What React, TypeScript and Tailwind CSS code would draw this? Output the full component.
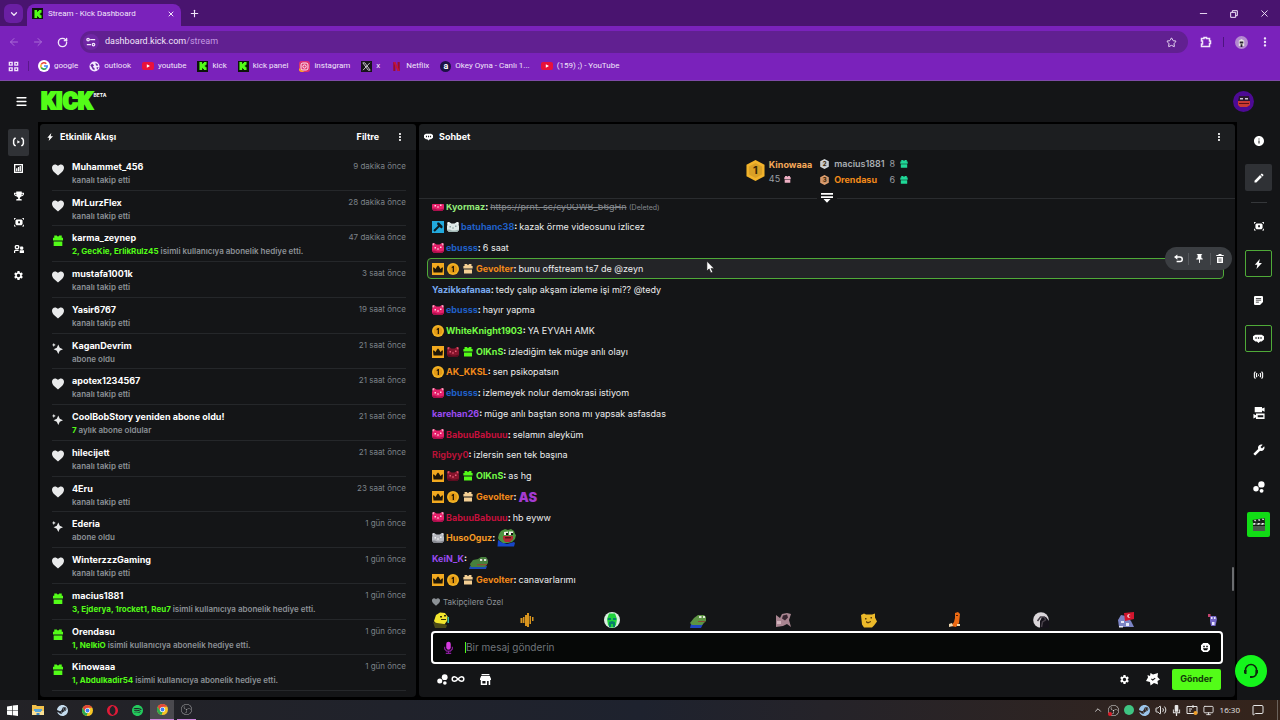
import type { ReactNode } from "react"
import { ArrowLeft, ArrowRight, ChevronDown, ChevronUp, Menu, MessageSquare, Minus, Monitor, Plus, RotateCw, Star, Volume2, X, Infinity as InfinityIcon } from "lucide-react"
import { MdEdit, MdInfo, MdPushPin, MdSettings, MdBuild, MdMoreVert } from "react-icons/md"
import { FaTrophy } from "react-icons/fa"
import { SiKick, SiSpotify, SiOpera, SiSteam, SiObsstudio } from "react-icons/si"

type Feed = { icon: "heart" | "gift" | "spark"; name: string; hi?: string; text: string; time: string }

const feed: Feed[] = [
  { icon: "heart", name: "Muhammet_456", text: "kanalı takip etti", time: "9 dakika önce" },
  { icon: "heart", name: "MrLurzFlex", text: "kanalı takip etti", time: "28 dakika önce" },
  { icon: "gift", name: "karma_zeynep", hi: "2, GecKie, ErlikRulz45", text: "isimli kullanıcıya abonelik hediye etti.", time: "47 dakika önce" },
  { icon: "heart", name: "mustafa1001k", text: "kanalı takip etti", time: "3 saat önce" },
  { icon: "heart", name: "Yasir6767", text: "kanalı takip etti", time: "19 saat önce" },
  { icon: "spark", name: "KaganDevrim", text: "abone oldu", time: "21 saat önce" },
  { icon: "heart", name: "apotex1234567", text: "kanalı takip etti", time: "21 saat önce" },
  { icon: "spark", name: "CoolBobStory yeniden abone oldu!", hi: "7", text: "aylık abone oldular", time: "21 saat önce" },
  { icon: "heart", name: "hilecijett", text: "kanalı takip etti", time: "21 saat önce" },
  { icon: "heart", name: "4Eru", text: "kanalı takip etti", time: "23 saat önce" },
  { icon: "spark", name: "Ederia", text: "abone oldu", time: "1 gün önce" },
  { icon: "heart", name: "WinterzzzGaming", text: "kanalı takip etti", time: "1 gün önce" },
  { icon: "gift", name: "macius1881", hi: "3, Ejderya, 1rocket1, Reu7", text: "isimli kullanıcıya abonelik hediye etti.", time: "1 gün önce" },
  { icon: "gift", name: "Orendasu", hi: "1, NelkiO", text: "isimli kullanıcıya abonelik hediye etti.", time: "1 gün önce" },
  { icon: "gift", name: "Kinowaaa", hi: "1, Abdulkadir54", text: "isimli kullanıcıya abonelik hediye etti.", time: "1 gün önce" },
]

type Msg = { badges?: string[]; name: string; color: string; text?: string; emote?: string; deleted?: boolean; active?: boolean }

const messages: Msg[] = [
  { badges: ["pig"], name: "Kyormaz", color: "text-[#93eb7a]", text: "https://prnt. sc/cy0OWB_b6gHn", deleted: true },
  { badges: ["mod", "catWhite"], name: "batuhanc38", color: "text-[#2060c8]", text: "kazak örme videosunu izlicez" },
  { badges: ["pig"], name: "ebusss", color: "text-[#2060c8]", text: "6 saat" },
  { badges: ["crown", "coin", "giftTan"], name: "Gevolter", color: "text-[#f28a1a]", text: "bunu offstream ts7 de @zeyn", active: true },
  { name: "Yazikkafanaa", color: "text-[#79aaf0]", text: "tedy çalıp akşam izleme işi mi?? @tedy" },
  { badges: ["pig"], name: "ebusss", color: "text-[#2060c8]", text: "hayır yapma" },
  { badges: ["coin"], name: "WhiteKnight1903", color: "text-[#75fd46]", text: "YA EYVAH AMK" },
  { badges: ["crown", "devil", "giftGreen"], name: "OlKnS", color: "text-[#75fd46]", text: "izlediğim tek müge anlı olayı" },
  { badges: ["coin"], name: "AK_KKSL", color: "text-[#f28a1a]", text: "sen psikopatsın" },
  { badges: ["pig"], name: "ebusss", color: "text-[#2060c8]", text: "izlemeyek nolur demokrasi istiyom" },
  { name: "karehan26", color: "text-[#9a4bf0]", text: "müge anlı baştan sona mı yapsak asfasdas" },
  { badges: ["pig"], name: "BabuuBabuuu", color: "text-[#c4103c]", text: "selamın aleyküm" },
  { name: "Rigbyy0", color: "text-[#b81238]", text: "izlersin sen tek başına" },
  { badges: ["crown", "devil", "giftGreen"], name: "OlKnS", color: "text-[#75fd46]", text: "as hg" },
  { badges: ["crown", "coin", "giftTan"], name: "Gevolter", color: "text-[#f28a1a]", emote: "as" },
  { badges: ["pig"], name: "BabuuBabuuu", color: "text-[#c4103c]", text: "hb eyww" },
  { badges: ["catGrey"], name: "HusoOguz", color: "text-[#f59a24]", emote: "pepeLaugh" },
  { name: "KeiN_K", color: "text-[#9a4bf0]", emote: "pepeLie" },
  { badges: ["crown", "coin", "giftTan"], name: "Gevolter", color: "text-[#f28a1a]", text: "canavarlarımı" },
]

function Heart({ className = "" }) {
  return (
    <svg viewBox="0 0 14 13" className={className} fill="currentColor">
      <path d="M7 1.800C8 .6 9.200 0 10.500 0 12.600 0 14 1.700 14 4c0 2.200-1.200 3.900-3 5.500L7 13 3 9.500C1.200 7.900 0 6.200 0 4 0 1.700 1.400 0 3.500 0 4.800 0 6 .6 7 1.800z" />
    </svg>
  )
}

function Gift({ className = "" }) {
  return (
    <svg viewBox="0 0 12 13" className={className} fill="currentColor">
      <path d="M1.500 0h3L6 1.500 7.500 0h3v2.500H12V6H0V2.500h1.500zM.8 7h10.400v5.500H.8z" />
    </svg>
  )
}

function Spark({ className = "" }) {
  return (
    <svg viewBox="0 0 14 14" className={className} fill="currentColor">
      <path d="M8 2 9.900 6.100 14 8 9.900 9.900 8 14 6.100 9.900 2 8l4.100-1.900zM2.300 0l.8 1.700 1.700.8-1.700.8-.8 1.700-.8-1.700L-.2 2.500l1.700-.8z" />
    </svg>
  )
}

function Bolt({ className = "" }) {
  return (
    <svg viewBox="0 0 10 12" className={className} fill="currentColor">
      <path d="M7 0 1 7h3L3 12 9.500 4.800H6z" />
    </svg>
  )
}

function Bubble({ className = "" }) {
  return (
    <svg viewBox="0 0 14 12" className={className} fill="currentColor">
      <path fillRule="evenodd" d="M3 1h8l3 2v4l-3 2.500H9L7 11.500 5 9.500H3L0 7V3zM3 4.200v2h1.700v-2zm3.200 0v2h1.700v-2zm3.200 0v2H11v-2z" />
    </svg>
  )
}

function Live({ className = "" }) {
  return (
    <svg viewBox="0 0 16 12" className={className} fill="none" stroke="currentColor" strokeWidth="1.8">
      <path d="M4.500 1 3 2 2 4v4l1 2 1.500 1M11.500 1 13 2l1 2v4l-1 2-1.500 1" />
      <path d="M6.500 4v4L10 6z" fill="currentColor" stroke="none" />
    </svg>
  )
}

function Signal({ className = "" }) {
  return (
    <svg viewBox="0 0 16 12" className={className} fill="none" stroke="currentColor" strokeWidth="1.600">
      <path d="M3.500 1 2 3v6l1.500 2M6 3 5 4v4l1 1M10 3l1 1v4l-1 1M12.500 1 14 3v6l-1.500 2" />
      <rect x="7.200" y="5" width="1.600" height="2" fill="currentColor" stroke="none" />
    </svg>
  )
}

function Clip({ className = "" }) {
  return (
    <svg viewBox="0 0 14 12" className={className} fill="currentColor">
      <path fillRule="evenodd" d="M3.500 2h7L12 3.500v5L10.500 10h-7L2 8.500v-5zM5.800 4.500v3h2.500v-3z" />
      <path d="M0 0h2.500v1.200H1.200V2.500H0zM11.500 0H14v2.500h-1.200V1.200h-1.300zM0 9.500h1.200v1.300h1.300V12H0zM12.800 9.500H14V12h-2.500v-1.200h1.300z" />
    </svg>
  )
}

function Chart({ className = "" }) {
  return (
    <svg viewBox="0 0 12 12" className={className} fill="currentColor">
      <path fillRule="evenodd" d="M0 0h12v12H0zM1.800 1.800v8.400h8.400V1.800zM2.800 5.500h1.700v4H2.800zM5.200 4h1.700v5.500H5.200zM7.500 2.800h1.700v6.700H7.500z" />
    </svg>
  )
}

function People({ className = "" }) {
  return (
    <svg viewBox="0 0 14 12" className={className} fill="currentColor">
      <path fillRule="evenodd" d="M2.500 0h3.500l1.500 1.500v3L6 6H2.500L1 4.500v-3zM3 1.700v2.600h2.500V1.700zM0 11.500V8l1.500-1.300h5V8.400H1.700v3.100zM9 2h3l1 1v2.500l-1 1H9.500l-1-1V3zM8 7.500h6v4H8z" />
    </svg>
  )
}

function Dots({ className = "" }) {
  return (
    <svg viewBox="0 0 14 14" className={className} fill="currentColor">
      <circle cx="9.800" cy="4" r="3.700" />
      <circle cx="3.500" cy="9" r="3.200" />
      <circle cx="10" cy="11.500" r="2.300" />
    </svg>
  )
}

function Note({ className = "" }) {
  return (
    <svg viewBox="0 0 12 12" className={className} fill="currentColor">
      <path fillRule="evenodd" d="M1 0h10l1 1v7l-4 4H1l-1-1V1zM2.500 2.500v1h7v-1zm0 2.500v1h7V5zm0 2.500v1h4v-1z" />
    </svg>
  )
}

function Cameras({ className = "" }) {
  return (
    <svg viewBox="0 0 14 14" className={className} fill="currentColor">
      <path fillRule="evenodd" d="M2 0h8.500v1.800L13.500.5v5l-3-1.300V6H2zM3.500 7.500h10V14h-10v-2L.5 13.300v-5l3 1.300zM5.500 9.500V12H12V9.500z" />
    </svg>
  )
}

function Store({ className = "" }) {
  return (
    <svg viewBox="0 0 14 14" className={className} fill="currentColor">
      <path d="M2 0h10v1.500H2zM1.500 2.500h11L14 6v1.500H0V6z" />
      <path fillRule="evenodd" d="M1 7h12v7h-2V9H9v5H1zM3 9v3h4V9z" />
    </svg>
  )
}

function Undo({ className = "" }) {
  return (
    <svg viewBox="0 0 12 12" className={className} fill="none" stroke="currentColor" strokeWidth="2">
      <path d="M2.500 4h5.500a2.700 2.700 0 0 1 0 6H3.500" />
      <path d="M4.500.5v7L0 4z" fill="currentColor" stroke="none" />
    </svg>
  )
}

function Wordmark() {
  return (
    <span className="flex items-start">
      <span className="font-[Roboto,sans-serif] text-[23px]/[18px] font-black text-[#53fc18] [-webkit-text-stroke:2px_#53fc18]">KICK</span>
      <span className="ml-px text-[5px]/[5px] font-bold text-white">BETA</span>
    </span>
  )
}

/* small face used by the pig, cat and devil badges */
function Face({ base, shade, tip, eye }: { base: string; shade: string; tip: string; eye: string }) {
  return (
    <svg viewBox="0 0 12 12" className="size-3 shrink-0">
      <path d="M.5 1.500 2 1l2.500 1.500h3L10 1l1.500.5v2L12 5v4l-2 2H2L0 9V5l.5-1.500z" fill={base} />
      <path d="M0 8.500h3l2 1h3l4-1V9l-2 2H2L0 9z" fill={shade} />
      <path d="M.5 1.500 2 1l.5 1-1 1.500H.5zM10 1l1.500.5v2h-1l-1-1.500z" fill={tip} />
      <path d="M2.500 5h1.500v1.500H2.500zM8 4.500h1.500V6H8zM5 6.500h2v1H5z" fill={eye} />
    </svg>
  )
}

function Badge({ kind }: { kind: string }) {
  switch (kind) {
    case "pig":
      return <Face base="#e6216b" shade="#ad0f4d" tip="#f9a6c2" eye="#ffd0df" />
    case "catWhite":
      return <Face base="#dfe8e7" shade="#a2b8b6" tip="#f4f8f8" eye="#8fa5a4" />
    case "catGrey":
      return <Face base="#b6b8bf" shade="#85878f" tip="#d8dae0" eye="#f4f4f6" />
    case "devil":
      return <Face base="#86142c" shade="#5d0c20" tip="#e05068" eye="#e9607a" />
    case "giftTan":
      return <span className="flex size-3 shrink-0 items-center justify-center text-[#f3cf94]"><Gift className="size-[10px]" /></span>
    case "giftGreen":
      return <span className="flex size-3 shrink-0 items-center justify-center text-[#53fc18]"><Gift className="size-[10px]" /></span>
    case "mod":
      return (
        <svg viewBox="0 0 12 12" className="size-3 shrink-0">
          <path d="M0 0h12v12H0z" fill="#22a9dd" />
          <path d="M5.500 1.500H7L10.500 5v1.500l-1 1L7.500 6 2.800 10.700 1.300 9.200 6 4.700 5 3z" fill="#0d1a20" />
        </svg>
      )
    case "crown":
      return (
        <svg viewBox="0 0 12 12" className="size-3 shrink-0">
          <path d="M0 0h12v12H0z" fill="#f2a91f" />
          <path d="M1 4.500h1L3.500 6 5 3.500 6 2.500l1 1L8.500 6 10 4.500h1l-.5 5h-9z" fill="#1d1608" />
        </svg>
      )
    default:
      return (
        <svg viewBox="0 0 12 12" className="size-3 shrink-0">
          <circle cx="6" cy="6" r="6" fill="#f3b324" />
          <circle cx="6" cy="6" r="4.300" fill="#e39a16" />
          <path d="M4.700 4 6 3h1v6H5.700V4.800l-1 .4z" fill="#2a1b05" />
        </svg>
      )
  }
}

function Emote({ kind }: { kind: string }) {
  if (kind === "as") return <span className="text-[13px]/[18px] font-black text-[#a33bd0]">AS</span>
  if (kind === "pepeLaugh")
    return (
      <svg viewBox="0 0 20 18" className="h-[18px] w-5">
        <path d="M1 11l3 2 6 2 7-2 1 1-1 3.500H.5z" fill="#1746c8" />
        <path d="M2 5 4 2l4-2 3 1 3-1 3 2 1 3 1 1-1 4-3 3-4 1H6l-4-3-1-2z" fill="#4f9440" />
        <path d="M7 3l4-.5V6H7zM12 2.500h4V6h-4z" fill="#f3f3e8" />
        <path d="M9 4h2v2H9zM14 4h2v2h-2z" fill="#111" />
        <path d="M6 7h10v3l-3 3H8L6 10z" fill="#b32a35" />
        <path d="M8 8h6v1.500H8z" fill="#5e0f18" />
      </svg>
    )
  return (
    <svg viewBox="0 0 20 12" className="h-3 w-5 translate-y-1">
      <path d="M1 9h17l-1 3H0z" fill="#1c4bb8" />
      <path d="M1 7 4 3l5-1 3-2h5l2 3v3l-3 4H2z" fill="#47803d" />
      <path d="M11 2h3v2h-3zM15 2h3v2h-3z" fill="#dfe8d8" />
      <path d="M13 2.500h1v1h-1zM17 2.500h1v1h-1z" fill="#111" />
      <path d="M8 7h10v1.300H8z" fill="#8a4a35" />
    </svg>
  )
}

/* quick emotes above the message box */
const quick: { label: string; art: ReactNode }[] = [
  { label: "limon", art: <><path d="M1 9 3 3l4-2.500 5 .5 2.500 3.500L14 9l-3 4H4z" fill="#f1e52e" /><path d="M0 10l4 1 7 1 3 1-1 3H2z" fill="#4b4a18" /><path d="M7 4h2v1.500H7zM11 3h2v1.500h-2zM8 7l5 0v1H8z" fill="#33300c" /><path d="M14.500 5H16v6h-1.500z" fill="#37b7a4" /></> },
  { label: "dans", art: <path d="M1.500 6h2v5h-2zM4 5h1.500v6H4zM6 3h2v11H6zM8 1h2v14H8zM10.500 4h1.500v8h-1.500zM13 5h1.500v4H13z" fill="#d9951f" /> },
  { label: "kulaklık", art: <><circle cx="8" cy="8" r="8" fill="#d9efe0" /><path d="M3 7 5 1.500h6L13 7l-1 6-2 2.500H6L4 13z" fill="#1fd23c" /><path d="M4 6h3v2H4zM9 6h3v2H9zM5 10l3-1 3 1v5H9v-3H7v3H5z" fill="#087d6c" /></> },
  { label: "pepe", art: <><path d="M1 12h12l-2 4H0z" fill="#2148c0" /><path d="M0 11 4 6l4-3h6l2 2v4l-4 4H2z" fill="#5d9444" /><path d="M9 4h2.500v2H9zM13 4h2v2h-2z" fill="#dfe8d8" /><path d="M8 9h7v1H8z" fill="#8a4a35" /></> },
  { label: "kedi", art: <><path d="M0 3l4 3 2-4 5-1 4 1-2 6 2 7-4-3-4 2-7 1z" fill="#a98591" /><path d="M7 3.500l4-1 1 3-3 3-3-2z" fill="#382530" /><path d="M1 9h4v3H1z" fill="#d3b4bd" /></> },
  { label: "ekmek", art: <><path d="M0 3l3-1.500 2 1h6l3-1v4l2 4-3 4-2 2H3l-2-3z" fill="#ecb92a" /><path d="M4 6h1.500v1.500H4zM9.500 5H11v1.500H9.500zM5 9l2 1 3-1v1l-3 1.500-2-1z" fill="#5d3f08" /></> },
  { label: "hotdog", art: <><path d="M8 1l3-1 2 2-1 9-3 4-5-1 3-4 1-4z" fill="#ec6a13" /><path d="M2 12l3-1 1 3-4 1zM10 12h3v2h-3z" fill="#f0d9b0" /><path d="M9 3h2v1H9z" fill="#511f05" /></> },
  { label: "girdap", art: <><circle cx="8" cy="8" r="7.800" fill="#dad6da" /><path d="M7 16V9l2-4h4l3 4v7z" fill="#15121a" /><path d="M4.500 9l3-4 4 0 1 3-3 2-1 5" fill="none" stroke="#463f48" strokeWidth="1.500" /></> },
  { label: "bayrak", art: <><path d="M0 8l3-5 5 1 5 5 3 6H1z" fill="#7c84c5" /><path d="M3 9h3v2H3zM8 11h3v3H8zM1 14h4v1.500H1z" fill="#e6e9fa" /><path d="M6 1l10-1v7l-9 2z" fill="#d3162e" /><circle cx="11" cy="4" r="1.700" fill="#fff" /><circle cx="11.800" cy="4" r="1.300" fill="#d3162e" /></> },
  { label: "robot", art: <><path d="M6 4h6l1 3-1.500 7H7L6 9z" fill="#7466c5" /><path d="M7 5h1.500v2H7zM10 5h1.500v2H10zM8 10h2.500v3H8z" fill="#e8e4ff" /><path d="M4 2h2.500v3H4z" fill="#c5446e" /></> },
]

function Hex({ n, fill, className }: { n: string; fill: string; className: string }) {
  return (
    <span className={`relative flex shrink-0 items-center justify-center ${className}`}>
      <svg viewBox="0 0 20 22" className="absolute inset-0 size-full">
        <path d="M10 0l9.500 5v12L10 22 .5 17V5z" fill={fill} />
        <path d="M10 3l7 3.700v8.600L10 19l-7-3.700V6.700z" fill="#000" opacity=".1" />
      </svg>
      <span className="relative font-bold text-[#3a2604]">{n}</span>
    </span>
  )
}

function Chrome({ className = "" }) {
  return (
    <svg viewBox="0 0 12 12" className={className}>
      <circle cx="6" cy="6" r="6" fill="#f6c526" />
      <path d="M.8 3A6 6 0 0 1 11.200 3H6L3.400 7.500z" fill="#e2443a" />
      <path d="M.8 3 3.400 7.500 6 9l-1 3A6 6 0 0 1 .8 3z" fill="#2da94f" />
      <circle cx="6" cy="6" r="2.800" fill="#fff" />
      <circle cx="6" cy="6" r="2.100" fill="#3f7ff0" />
    </svg>
  )
}

function YouTube() {
  return (
    <svg viewBox="0 0 12 10" className="h-[10px] w-3">
      <rect y="1" width="12" height="8" rx="2" fill="#e8113c" />
      <path d="M4.800 3.200v3.600L8 5z" fill="#fff" />
    </svg>
  )
}

function KickTile() {
  return <span className="flex size-[11px] items-center justify-center bg-[#0b140a] text-[#53fc18]"><SiKick className="size-2" /></span>
}

const bookmarks: { label: string; icon: ReactNode }[] = [
  {
    label: "google",
    icon: (
      <svg viewBox="0 0 12 12" className="size-3">
        <circle cx="6" cy="6" r="6" fill="#fff" />
        <g fill="none" strokeWidth="1.600">
          <path d="M8.300 3.700A3.200 3.200 0 0 0 3.200 4.500" stroke="#e8453c" />
          <path d="M3.200 4.500a3.200 3.200 0 0 0 0 3" stroke="#f6bb1c" />
          <path d="M3.200 7.500a3.200 3.200 0 0 0 5 .8" stroke="#34a853" />
          <path d="M6 6h3.200a3.200 3.200 0 0 1-1 2.300" stroke="#4285f4" />
        </g>
      </svg>
    ),
  },
  {
    label: "outlook",
    icon: (
      <svg viewBox="0 0 12 12" className="size-[11px]">
        <circle cx="6" cy="6" r="5.500" fill="#f4eaff" />
        <path d="M1.500 4.500l2-1.500 2 1.500L4 6.500l2 1V10l-2-1-1-2zM7 2l3 2-1 1.500L7.500 4.500zM8 7l2.500-.5L9 9.500z" fill="#6a22a4" />
      </svg>
    ),
  },
  { label: "youtube", icon: <YouTube /> },
  { label: "kick", icon: <KickTile /> },
  { label: "kick panel", icon: <KickTile /> },
  {
    label: "instagram",
    icon: (
      <svg viewBox="0 0 12 12" className="size-[11px]">
        <rect width="12" height="12" rx="3" fill="#dc3170" />
        <path d="M0 8l6 4H3a3 3 0 0 1-3-3z" fill="#f7a52d" />
        <g fill="none" stroke="#fff">
          <rect x="2.200" y="2.200" width="7.600" height="7.600" rx="2" />
          <circle cx="6" cy="6" r="1.800" />
        </g>
      </svg>
    ),
  },
  {
    label: "x",
    icon: (
      <svg viewBox="0 0 12 12" className="size-[11px]">
        <path d="M0 0h12v12H0z" fill="#17131a" />
        <path d="M2 2h2.200L10 10H7.800zM9.700 2 2.200 10" fill="none" stroke="#cfcbd4" />
      </svg>
    ),
  },
  {
    label: "Netflix",
    icon: (
      <svg viewBox="0 0 12 12" className="size-[11px]">
        <path d="M2.500 1h2.300v10H2.500zM7.200 1h2.300v10H7.200z" fill="#9d0d2a" />
        <path d="M2.500 1h2.300l4.700 10H7.200z" fill="#c4143a" />
      </svg>
    ),
  },
  { label: "Okey Oyna - Canlı 1...", icon: <span className="flex size-[11px] items-center justify-center rounded-full bg-[#1c1245] text-[9px]/[9px] font-bold text-white">a</span> },
  { label: "(159) ;) - YouTube", icon: <YouTube /> },
]

function BrowserBar() {
  return (
    <div className="font-[Roboto,'Noto_Sans',sans-serif] text-[#f1e6fa]">
      <div className="flex h-[26px] items-end bg-[#49146f]">
        <button className="mb-[3px] ml-1 flex size-[19px] items-center justify-center rounded-md bg-[#6a1fa3]" aria-label="Sekmelerde ara"><ChevronDown className="size-[10px]" strokeWidth={3} /></button>
        <div className="ml-1 flex h-[22px] w-[154px] items-center rounded-t-lg bg-[#7a22bb] pb-[3px] pl-[5px] text-[8px]">
          <KickTile />
          <span className="ml-[5px]">Stream - Kick Dashboard</span>
          <button className="mr-[6px] ml-auto" aria-label="Sekmeyi kapat"><X className="size-2" strokeWidth={3} /></button>
        </div>
        <button className="mb-[7px] ml-2" aria-label="Yeni sekme"><Plus className="size-[11px]" strokeWidth={2.5} /></button>
        <div className="mr-[10px] mb-[7px] ml-auto flex items-center gap-5">
          <button aria-label="Küçült"><Minus className="size-[11px]" /></button>
          <button aria-label="Önceki boyut">
            <svg viewBox="0 0 12 12" className="size-[10px]" fill="none" stroke="currentColor" strokeWidth="1.200"><path d="M2 4h6v6H2zM4 4V2h6v6H8" /></svg>
          </button>
          <button aria-label="Kapat"><X className="size-[11px]" /></button>
        </div>
      </div>
      <div className="flex h-8 items-center bg-[#7a22bb] px-2">
        <button className="text-[#a96bd6]" aria-label="Geri"><ArrowLeft className="size-3" /></button>
        <button className="ml-3 text-[#a96bd6]" aria-label="İleri"><ArrowRight className="size-3" /></button>
        <button className="ml-[13px]" aria-label="Yenile"><RotateCw className="size-[11px]" strokeWidth={3} /></button>
        <div className="ml-3 flex h-[22px] flex-1 items-center rounded-full bg-[#612091] px-[3px] text-[9px]">
          <span className="mr-[6px] flex size-4 items-center justify-center rounded-full bg-[#6f26a4]">
            <svg viewBox="0 0 12 12" className="size-[10px]" fill="none" stroke="currentColor" strokeWidth="1.500"><path d="M5 3h6M1 9h5" /><circle cx="2.500" cy="3" r="1.500" /><circle cx="9" cy="9" r="1.500" /></svg>
          </span>
          <span>dashboard.kick.com<span className="text-[#c39ae2]">/stream</span></span>
          <Star className="mr-2 ml-auto size-[11px]" />
        </div>
        <svg viewBox="0 0 12 12" className="ml-3 size-3" fill="none" stroke="currentColor" strokeWidth="1.500">
          <path d="M1.500 2.500H4V1.500h2.500v1h3V5h1v2.500h-1v3h-8V8h1V5h-1z" />
        </svg>
        <span className="ml-[11px] h-[10px] w-px bg-[#4d1480]" />
        <span className="ml-[11px] flex size-[13px] items-center justify-center rounded-full bg-[#b48bd0]">
          <svg viewBox="0 0 10 10" className="size-[9px]"><path d="M2 3l3-2 3 2v6H2z" fill="#e8e6e4" /><path d="M3 4h4v2H3zM4 7h2v3H4z" fill="#2a2430" /></svg>
        </span>
        <button className="ml-[10px]" aria-label="Menü"><MdMoreVert className="size-[14px]" /></button>
      </div>
      <nav className="flex h-[23px] items-center border-b border-[#7f4aa8] bg-[#7a22bb] pb-[6px] pl-2 text-[8px]">
        <svg viewBox="0 0 12 12" className="size-[11px]" fill="none" stroke="currentColor" strokeWidth="1.500"><path d="M1.500 1.500h3v3h-3zM7.500 1.500h3v3h-3zM1.500 7.500h3v3h-3zM7.500 7.500h3v3h-3z" /></svg>
        <span className="mr-[9px] ml-[9px] h-[10px] w-px bg-[#5a178c]" />
        <div className="flex gap-[11px]">
          {bookmarks.map((b) => (
            <a key={b.label} href="#" className="flex items-center gap-1">{b.icon}{b.label}</a>
          ))}
        </div>
      </nav>
    </div>
  )
}

function LeftNav() {
  const items = [
    { label: "Yayın", icon: <Live className="w-[13px]" /> },
    { label: "Analiz", icon: <Chart className="w-[9px]" /> },
    { label: "Başarılar", icon: <FaTrophy className="size-[10px]" /> },
    { label: "Klipler", icon: <Clip className="w-[10px]" /> },
    { label: "Topluluk", icon: <People className="w-[10px]" /> },
    { label: "Ayarlar", icon: <MdSettings className="size-[11px]" /> },
  ]
  return (
    <nav className="w-[38px] shrink-0 bg-[#141517] pt-[7px]">
      <div className="grid h-40 auto-rows-fr">
        {items.map((it, i) => (
          <a key={it.label} href="#" aria-label={it.label} className={`ml-2 flex w-[21px] items-center justify-center rounded-xs ${i === 0 ? "bg-[#303236]" : ""}`}>{it.icon}</a>
        ))}
      </div>
    </nav>
  )
}

function PanelHead({ icon, title, children }: { icon: ReactNode; title: string; children: ReactNode }) {
  return (
    <header className="flex h-[26px] shrink-0 items-center bg-[#1c1e20] text-[9px] font-bold">
      {icon}
      <h2>{title}</h2>
      <div className="ml-auto flex items-center">{children}</div>
    </header>
  )
}

function ActivityPanel() {
  return (
    <section className="flex w-[376px] shrink-0 flex-col overflow-hidden rounded-sm bg-[#141517]">
      <PanelHead icon={<Bolt className="mr-[6px] ml-[6px] h-2 w-2" />} title="Etkinlik Akışı">
        <button className="mr-[15px]">Filtre</button>
        <button className="mr-[10px]" aria-label="Seçenekler"><MdMoreVert className="size-3" /></button>
      </PanelHead>
      <ul className="mt-[5px] mr-[10px] mb-[6px] ml-3 grid flex-1 auto-rows-fr">
        {feed.map((f) => (
          <li key={f.name} className="flex items-start border-b border-[#25272a] pt-[5px]">
            <span className="mt-1 mr-[9px] flex h-3 w-[11px] shrink-0 justify-center">
              {f.icon === "heart" && <Heart className="h-3 w-3 shrink-0 text-[#e9eaeb]" />}
              {f.icon === "gift" && <Gift className="h-3 w-[10px] text-[#53fc18]" />}
              {f.icon === "spark" && <Spark className="size-[11px] text-[#e9eaeb]" />}
            </span>
            <div className="flex-1 whitespace-nowrap">
              <p className="text-[9px]/[14px] font-bold text-white">{f.name}</p>
              <p className="text-[8px]/[13px] font-semibold text-[#8c9196]">
                {f.hi && <span className="font-bold text-[#53fc18]">{f.hi} </span>}
                {f.text}
              </p>
            </div>
            <time className="text-[8px]/[13px] text-[#7d8389]">{f.time}</time>
          </li>
        ))}
      </ul>
    </section>
  )
}

function ChatRow({ m }: { m: Msg }) {
  return (
    <li className={`relative flex min-h-0 flex-1 items-center gap-[2px] rounded-sm border px-1 whitespace-nowrap ${m.active ? "border-[#4faa38] bg-[#232427]" : "border-transparent"}`}>
      {m.badges && <span className="flex gap-[3px]">{m.badges.map((b) => <Badge key={b} kind={b} />)}</span>}
      <span className={`font-bold ${m.color}`}>{m.name}<span className="text-white">:</span></span>
      {m.emote && <Emote kind={m.emote} />}
      {m.deleted
        ? <span className="text-[#85898e]"><s>{m.text}</s> <span className="text-[7px]">(Deleted)</span></span>
        : <span className="text-[#eceded]">{m.text}</span>}
      {m.active && (
        <>
          <svg viewBox="0 0 10 14" className="absolute top-1/2 left-[278px] h-[13px] w-[9px] -translate-y-2">
            <path d="M1 0v11l2.500-2.500L5.500 13l2-1-2-4H9z" fill="#fff" stroke="#111" strokeWidth=".6" />
          </svg>
          <div className="absolute -top-3 -right-[9px] flex h-[23px] w-[67px] items-center justify-center gap-[5px] rounded-full bg-[#3b3e42] text-white">
            <button aria-label="Yanıtla"><Undo className="size-[9px]" /></button>
            <span className="h-3 w-px bg-[#55585c]" />
            <button aria-label="Sabitle"><MdPushPin className="size-[11px]" /></button>
            <span className="h-3 w-px bg-[#55585c]" />
            <button aria-label="Sil">
              <svg viewBox="0 0 10 12" className="h-[9px] w-2" fill="currentColor"><path fillRule="evenodd" d="M3 0h4v1.200h3v1.600H0V1.200h3zM1 4h8v8H1zM3.300 5.500v5h1v-5zm2.400 0v5h1v-5z" /></svg>
            </button>
          </div>
        </>
      )}
    </li>
  )
}

function Leaderboard() {
  return (
    <div className="relative flex h-[49px] shrink-0 justify-center border-b border-[#2a2c2f] pt-[6px]">
      <Hex n="1" fill="#f2b32b" className="mt-1 mr-1 h-[21px] w-[19px] text-[11px]" />
      <div className="mt-[2px] mr-2 text-[9px]/[14px]">
        <p className="font-bold text-[#f5a95a]">Kinowaaa</p>
        <p className="flex items-center gap-1 text-[#9a9fa4]">45 <Gift className="size-[7px] text-[#eeb0c4]" /></p>
      </div>
      <div className="text-[9px]/[16px] font-semibold">
        <p className="flex items-center gap-[5px]"><Hex n="2" fill="#d5dadd" className="h-[10px] w-[9px] text-[6px]" /><span className="text-[#a9aeb2]">macius1881</span><span className="font-normal text-[#9a9fa4]">8</span><Gift className="ml-auto size-2 text-[#1fd898]" /></p>
        <p className="flex items-center gap-[5px]"><Hex n="3" fill="#e2a272" className="h-[10px] w-[9px] text-[6px]" /><span className="font-bold text-[#f28a1a]">Orendasu</span><span className="ml-auto font-normal text-[#9a9fa4]">6</span><Gift className="size-2 text-[#1fd898]" /></p>
      </div>
      <button className="absolute -bottom-[5px] left-1/2 flex h-[10px] w-5 -translate-x-1/2 items-center justify-center bg-[#141517]" aria-label="Sıralamayı gizle">
        <svg viewBox="0 0 12 10" className="h-[10px] w-3" fill="currentColor"><path d="M0 0h12v1.700H0zM0 3.200h12v1.700H0zM2.500 6h7L6 9.800z" /></svg>
      </button>
    </div>
  )
}

function ChatPanel() {
  return (
    <section className="flex min-w-0 flex-1 flex-col overflow-hidden rounded-sm bg-[#141517]">
      <PanelHead icon={<Bubble className="mr-[6px] ml-[5px] h-2 w-[9px]" />} title="Sohbet">
        <button className="mr-[10px]" aria-label="Sohbet seçenekleri"><MdMoreVert className="size-3" /></button>
      </PanelHead>
      <Leaderboard />
      <div className="mt-[5px] flex min-h-0 flex-1 overflow-hidden">
        <ul className="-mt-2 mb-px ml-2 flex flex-1 flex-col text-[9px]">
          {messages.map((m, i) => <ChatRow key={i} m={m} />)}
        </ul>
        <div className="flex w-[11px] items-end justify-end pr-px"><span className="h-6 w-[2px] rounded-full bg-[#6b6d70]" /></div>
      </div>
      <div className="mr-3 ml-3 shrink-0">
        <p className="flex h-[21px] items-center gap-[3px] pt-px pl-px text-[8px] text-[#8c9196]"><Heart className="h-2 w-2" />Takipçilere Özel</p>
        <div className="flex h-[19px] items-start justify-between pr-[3px] pl-[2px]">
          {quick.map((q) => (
            <button key={q.label} aria-label={q.label}><svg viewBox="0 0 16 16" className="h-4 w-4">{q.art}</svg></button>
          ))}
        </div>
        <div className="flex h-[33px] items-center rounded-sm border-2 border-white bg-[#060807] pr-[11px] pl-[11px]">
          <svg viewBox="0 0 10 14" className="h-[14px] w-[9px]">
            <rect x="2.500" width="5" height="9" rx="2.500" fill="#d63be0" />
            <path d="M.7 5.500v2.500L3 10.500h4L9.300 8V5.500M5 10v3M2 13h6" fill="none" stroke="#8a1d9d" strokeWidth="1.300" />
          </svg>
          <span className="ml-3 h-[11px] w-px bg-[#53fc18]" />
          <input aria-label="Mesaj" placeholder="Bir mesaj gönderin" className="min-w-0 flex-1 text-[10px] outline-none placeholder:text-[#70757a]" />
          <button aria-label="İfadeler">
            <svg viewBox="0 0 12 12" className="size-[9px]" fill="#fff"><path fillRule="evenodd" d="M3 0h6l3 3v6l-3 3H3L0 9V3zM3 3.500V5.500h2v-2zm4 0v2h2v-2zM2.500 7l1.500 2.500h4L9.500 7z" /></svg>
          </button>
        </div>
        <div className="flex h-[33px] items-center pb-[3px] pl-[6px]">
          <Dots className="size-[11px]" />
          <InfinityIcon className="ml-[3px] size-[14px]" strokeWidth={2.500} />
          <button className="ml-[15px]" aria-label="Mağaza"><Store className="size-[11px]" /></button>
          <button className="mr-4 ml-auto" aria-label="Sohbet ayarları"><MdSettings className="size-[11px]" /></button>
          <button className="mr-3" aria-label="Rozet">
            <svg viewBox="0 0 14 14" className="size-[14px]" fill="#fff"><path fillRule="evenodd" d="M4.500 1 7 2.500 12 1l-.5 4L14 7.500l-2.500 1.500.5 3.500L8 11l-3.500 2.500L4 10 0 9l2-3.500L1.500 3 4 4zM5 7.200 6.700 8.800 9.500 6.500 9 5.700 6.700 7.300 5.700 6.500z" /></svg>
          </button>
          <button className="mr-[2px] h-[21px] w-[49px] rounded-xs bg-[#53fc18] text-[9px] font-bold text-[#12380a]">Gönder</button>
        </div>
      </div>
    </section>
  )
}

function RightRail() {
  const box = "flex h-[27px] w-[27px] shrink-0 items-center justify-center rounded-xs"
  const ring = "border border-[#4faa38]"
  return (
    <nav className="flex w-[43px] shrink-0 flex-col items-center gap-[10px] bg-[#141517] pt-[5px]">
      <button aria-label="Bilgi" className={box}><MdInfo className="size-3" /></button>
      <button aria-label="Düzenle" className={`${box} bg-[#2f3135]`}><MdEdit className="size-3" /></button>
      <span className="mt-px h-px w-4 shrink-0 bg-[#35373a]" />
      <button aria-label="Önizleme" className={box}><Clip className="w-[10px]" /></button>
      <button aria-label="Etkinlik" className={`${box} ${ring}`}><Bolt className="h-[10px]" /></button>
      <button aria-label="Notlar" className={box}><Note className="w-[9px]" /></button>
      <button aria-label="Sohbet" className={`mt-px ${box} ${ring}`}><Bubble className="w-[11px]" /></button>
      <button aria-label="Yayın" className={box}><Signal className="w-[11px]" /></button>
      <button aria-label="Kameralar" className={box}><Cameras className="w-3" /></button>
      <button aria-label="Araçlar" className={box}><MdBuild className="size-3 -scale-x-100" /></button>
      <button aria-label="Puanlar" className={box}><Dots className="w-3" /></button>
      <button aria-label="Klip" className="mt-[2px] flex h-[25px] w-[23px] shrink-0 items-center justify-center rounded-xs bg-[#12dc16]">
        <svg viewBox="0 0 14 15" className="w-[14px]">
          <path d="M1 6h12v8H1z" fill="#4a594c" />
          <path d="M.5 3 12.500 1l.5 5H1z" fill="#1c211d" />
          <path d="M2 3l1.500-.3.800 1.500H2.700zM6 2.400l1.500-.3.800 1.600H6.600zM10 1.700l1.500-.3.500 1.600h-1.500zM1.500 6H3.500l-.8 1.700H1.200zM6 6h2l-.8 1.700H5.200zM10 6h2l-.8 1.700H9.200z" fill="#e5e9e5" />
          <path d="M1 8h12v1H1z" fill="#161a16" />
        </svg>
      </button>
    </nav>
  )
}

function Taskbar() {
  const slot = "flex h-5 w-[25px] items-center justify-center"
  return (
    <footer className="flex h-5 shrink-0 items-center bg-linear-to-r from-[#232226] via-[#1e222e] to-[#35241b] font-['Open_Sans','Noto_Sans',sans-serif] text-[8px] text-[#e6e6e6]">
      <button aria-label="Başlat" className={slot}><svg viewBox="0 0 12 12" className="size-[11px]" fill="#fff"><path d="M0 1.500 5.500.7v5H0zM6.200.6 12 0v5.700H6.200zM0 6.300h5.500v5L0 10.500zM6.200 6.300H12V12l-5.800-.7z" /></svg></button>
      <button aria-label="Dosya Gezgini" className={slot}><svg viewBox="0 0 12 12" className="size-3"><path d="M0 1h4l1 1h7v9H0z" fill="#f2c14c" /><path d="M2 5h8v5H2z" fill="#58a5d8" /><path d="M0 7h3v4H0zM9 7h3v4H9zM3 8h6v3H3z" fill="#f9df94" /><path d="M4.500 9h3v2h-3z" fill="#3d85bd" /></svg></button>
      <button aria-label="Steam" className={slot}><SiSteam className="size-[11px] text-[#c5dcee]" /></button>
      <button aria-label="Chrome" className={slot}><Chrome className="size-[11px]" /></button>
      <button aria-label="Opera" className={slot}><SiOpera className="size-[11px] text-[#e01b38]" /></button>
      <button aria-label="Spotify" className={slot}><SiSpotify className="size-[11px] text-[#23c95c]" /></button>
      <button aria-label="Chrome profil" className="flex h-5 w-6 items-center justify-center border-b border-[#cf86dc] bg-[#4a494f]"><Chrome className="size-[11px]" /></button>
      <button aria-label="OBS" className="ml-[3px] flex h-5 w-[19px] items-center justify-center border-b border-[#cf86dc]"><SiObsstudio className="size-[11px] text-[#a6a6a8]" /></button>
      <div className="ml-auto flex h-5 items-center gap-[5px]">
        <ChevronUp className="size-[10px]" />
        <span className="relative"><SiObsstudio className="size-[11px]" /><span className="absolute bottom-0 left-0 size-1 rounded-full bg-[#e01b28]" /></span>
        <span className="size-[10px] rounded-full bg-[#3fc482]" />
        <SiSteam className="size-[11px] text-[#9cc5ea]" />
        <Volume2 className="size-3" />
        <svg viewBox="0 0 10 12" className="h-[11px] w-[9px]" fill="currentColor"><rect x="3" width="4" height="7.500" rx="1" /><path d="M1 5h1v3h6V5h1v4H5.700v3H4.300V9H1z" /></svg>
        <svg viewBox="0 0 12 12" className="size-3" fill="none" stroke="currentColor"><path d="M1 2.500h10v7H1zM3 5h3M3 7h2M7 1v3" /><circle cx="9.500" cy="9" r="2" fill="#f0a02a" stroke="none" /></svg>
        <Monitor className="size-[11px]" />
        <span className="ml-px">16:30</span>
        <MessageSquare className="ml-[7px] size-3" />
        <span className="mr-[2px] ml-2 h-5 w-px bg-[#6b625c]" />
      </div>
    </footer>
  )
}

export default function App() {
  return (
    <div className="relative flex h-screen flex-col overflow-hidden bg-black font-[Inter,sans-serif] text-white">
      <BrowserBar />
      <header className="flex h-[41px] shrink-0 items-center bg-[#141517] px-[15px]">
        <button aria-label="Menü"><Menu className="size-[13px]" strokeWidth={3} /></button>
        <a href="#" className="ml-[13px]"><Wordmark /></a>
        <button aria-label="Profil" className="mr-[11px] ml-auto flex size-[21px] items-center justify-center rounded-full bg-[#4d0a94]">
          <svg viewBox="0 0 14 12" className="h-3 w-[14px]"><path d="M2 0h10l1 5H1z" fill="#2a1830" /><path d="M3 2h3v1.500H3zM8 2h3v1.500H8z" fill="#cfc7d8" /><path d="M1 5h12v4l-3 2H3L1 9z" fill="#c93a34" /><path d="M2 7h10v1H2z" fill="#5b1015" /></svg>
        </button>
      </header>
      <main className="flex min-h-0 flex-1">
        <LeftNav />
        <div className="flex min-w-0 flex-1 gap-[3px] px-[2px] pt-[2px] pb-[3px]">
          <ActivityPanel />
          <ChatPanel />
        </div>
        <RightRail />
      </main>
      <Taskbar />
      <button aria-label="Destek" className="absolute right-[13px] bottom-[33px] flex size-8 items-center justify-center rounded-full bg-[#15f51c] text-[#0c2a0c]">
        <svg viewBox="0 0 16 16" className="size-4" fill="none" stroke="currentColor" strokeWidth="1.500">
          <path d="M2.500 9V7a5.500 5.500 0 0 1 11 0v2c0 3-2 5-5 5" />
          <path d="M1 7h2.500v4H2L1 10zM12.500 7H15v3l-1 1h-1.500zM7 13h2.500v2H7z" fill="currentColor" stroke="none" />
        </svg>
      </button>
    </div>
  )
}
